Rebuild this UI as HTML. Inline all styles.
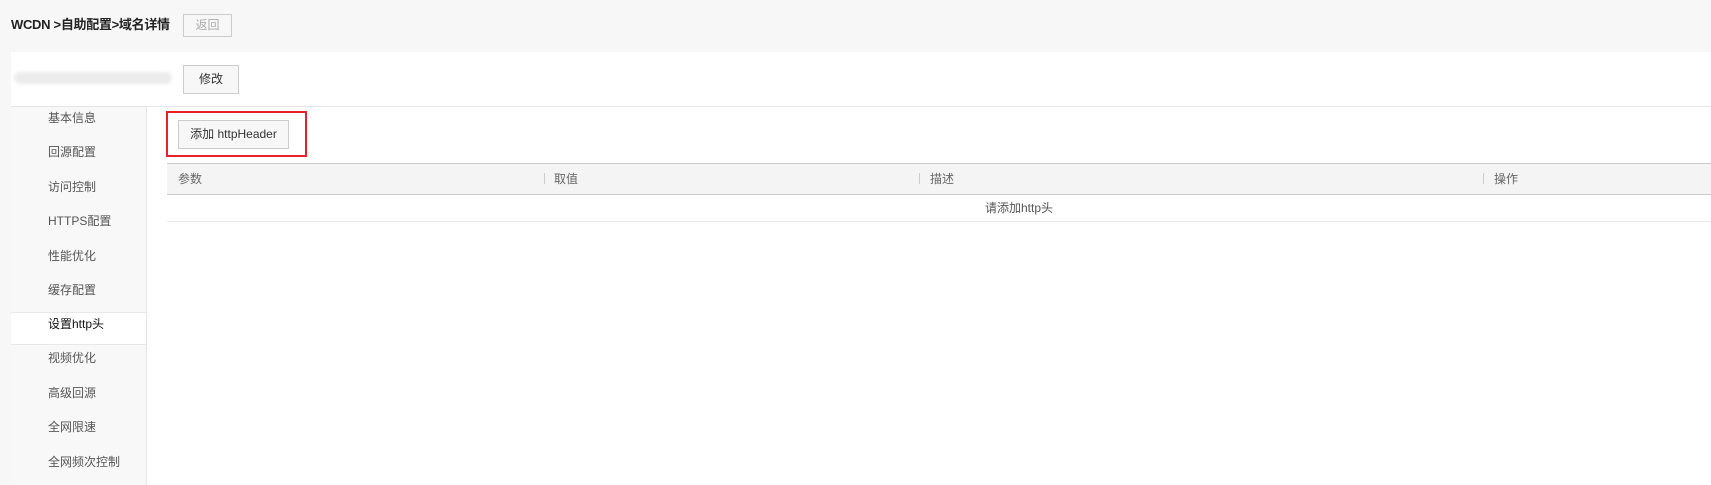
<!DOCTYPE html>
<html><head><meta charset="utf-8"><style>
*{margin:0;padding:0;box-sizing:border-box}
body{width:1711px;height:485px;background:#f7f7f8;font-family:"Liberation Sans","Noto Sans CJK SC",sans-serif;font-size:12px;color:#555;position:relative;overflow:hidden}
.abs{position:absolute}
.title{left:11px;top:15px;font-size:13px;font-weight:bold;color:#222;line-height:20px;letter-spacing:-0.3px;white-space:nowrap}
.btn{border:1px solid #ccc;background:#f7f7f7;color:#333;text-align:center;font-size:12px}
.panel{left:11px;top:52px;width:1700px;height:433px;background:#fff}
.side{left:11px;top:107px;width:136px;height:378px;background:#f8f8f8;border-right:1px solid #e5e5e5}
.item{position:absolute;left:37px;line-height:16px;color:#555}
.th{position:absolute;top:171px;line-height:16px;color:#666}
.sep{position:absolute;top:173px;width:1px;height:11px;background:#ccc}
</style></head><body>
<div class="abs title">WCDN &gt;自助配置&gt;域名详情</div>
<div class="abs btn" style="left:183px;top:14px;width:49px;height:23px;line-height:21px;color:#aaa;background:#f7f7f8">返回</div>
<div class="abs panel"></div>
<div class="abs" style="left:14px;top:72px;width:158px;height:12px;border-radius:6px;background:#ececec;filter:blur(1.5px)"></div>
<div class="abs btn" style="left:183px;top:65px;width:56px;height:29px;line-height:27px">修改</div>
<div class="abs" style="left:11px;top:106px;width:1700px;height:1px;background:#e6e6e6"></div>
<div class="abs side">
<div class="item" style="top:3px">基本信息</div>
<div class="item" style="top:37px">回源配置</div>
<div class="item" style="top:72px">访问控制</div>
<div class="item" style="top:106px">HTTPS配置</div>
<div class="item" style="top:141px">性能优化</div>
<div class="item" style="top:175px">缓存配置</div>
<div style="position:absolute;left:0;top:205px;width:135px;height:33px;background:#fff;border-top:1px solid #e8e8e8;border-bottom:1px solid #e8e8e8"></div>
<div class="item" style="top:209px;color:#111">设置http头</div>
<div class="item" style="top:243px">视频优化</div>
<div class="item" style="top:278px">高级回源</div>
<div class="item" style="top:312px">全网限速</div>
<div class="item" style="top:347px">全网频次控制</div>
</div>
<div class="abs" style="left:166px;top:111px;width:141px;height:46px;border:2px solid #e8202a"></div>
<div class="abs btn" style="left:178px;top:120px;width:111px;height:29px;line-height:27px">添加 httpHeader</div>
<div class="abs" style="left:167px;top:163px;width:1544px;height:32px;background:#f4f4f4;border-top:1px solid #ccc;border-bottom:1px solid #ccc"></div>
<div class="th" style="left:178px">参数</div>
<div class="sep" style="left:544px"></div><div class="th" style="left:554px">取值</div>
<div class="sep" style="left:919px"></div><div class="th" style="left:930px">描述</div>
<div class="sep" style="left:1483px"></div><div class="th" style="left:1494px">操作</div>
<div class="abs" style="left:985px;top:200px;line-height:16px;color:#555">请添加http头</div>
<div class="abs" style="left:167px;top:221px;width:1544px;height:1px;background:#eaeaea"></div>
</body></html>
